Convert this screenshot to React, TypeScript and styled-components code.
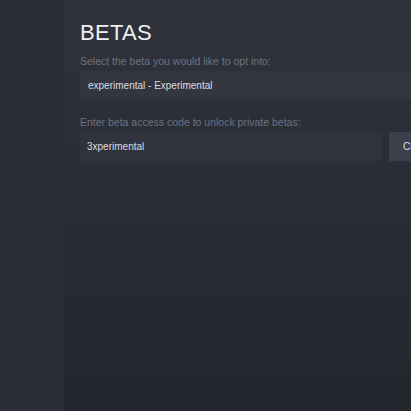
import React from "react";
import styled, { createGlobalStyle } from "styled-components";

const Global = createGlobalStyle`
  html, body { margin: 0; padding: 0; background: #24272e; }
  body { font-family: "Liberation Sans", Arial, sans-serif; }
`;

const Page = styled.div`
  display: flex;
  width: 411px;
  height: 411px;
  overflow: hidden;
`;

const Sidebar = styled.div`
  width: 64px;
  flex: none;
  background: #2b2e37;
`;

const Main = styled.div`
  flex: 1;
  min-width: 0;
  overflow: hidden;
  padding: 20px 0 0 16px;
  background: linear-gradient(180deg, #30333c 0%, #2a2d35 45%, #23262d 100%);
`;

const Content = styled.div`
  width: 389px;
  display: flex;
  flex-direction: column;
`;

const Title = styled.h1`
  margin: 0;
  font-size: 22px;
  line-height: 26px;
  font-weight: 400;
  letter-spacing: 0.3px;
  color: #eef0f3;
`;

const Label = styled.div<{ $top: number }>`
  margin-top: ${(p) => p.$top}px;
  margin-bottom: 3px;
  font-size: 10.5px;
  line-height: 14px;
  color: #6c7180;
`;

const Select = styled.div`
  height: 28px;
  display: flex;
  align-items: center;
  padding-left: 8px;
  background: #33363f;
  font-size: 10px;
  color: #dadde2;
`;

const Row = styled.div`
  display: flex;
  gap: 7px;
`;

const Input = styled.div`
  flex: 1;
  height: 29px;
  display: flex;
  align-items: center;
  padding-left: 7px;
  background: #30333c;
  font-size: 10px;
  color: #dadde2;
`;

const Button = styled.div`
  width: 80px;
  height: 29px;
  display: flex;
  align-items: center;
  padding-left: 14px;
  box-sizing: border-box;
  background: #3c404c;
  font-size: 10px;
  color: #dadde2;
`;

export default function App() {
  return (
    <>
      <Global />
      <Page>
        <Sidebar />
        <Main>
          <Content>
            <Title>BETAS</Title>
            <Label $top={8}>Select the beta you would like to opt into:</Label>
            <Select>experimental - Experimental</Select>
            <Label $top={16}>Enter beta access code to unlock private betas:</Label>
            <Row>
              <Input>3xperimental</Input>
              <Button>Check Code</Button>
            </Row>
          </Content>
        </Main>
      </Page>
    </>
  );
}
